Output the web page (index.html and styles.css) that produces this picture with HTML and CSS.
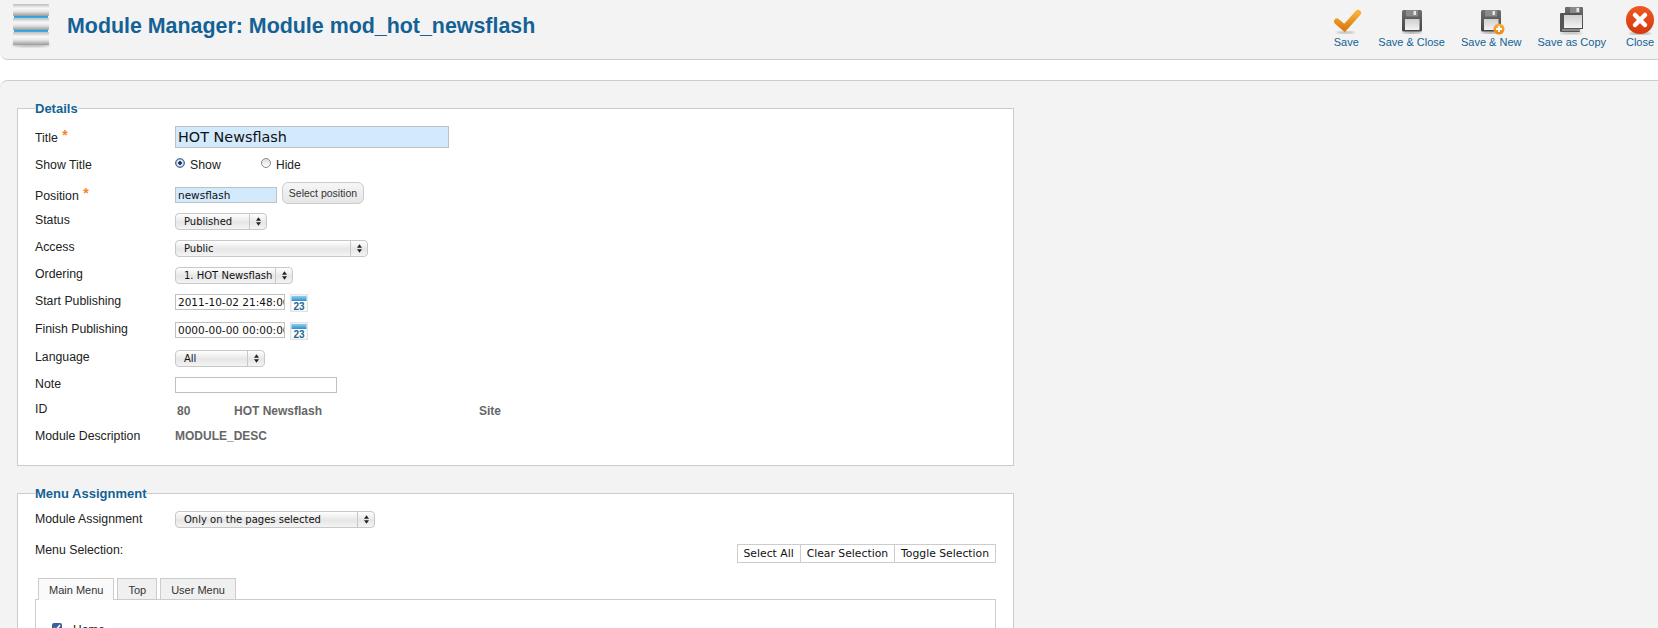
FILE: index.html
```html
<!DOCTYPE html>
<html lang="en">
<head>
<meta charset="utf-8">
<title>Module Manager: Module mod_hot_newsflash</title>
<link rel="stylesheet" href="styles.css">
</head>
<body>
<svg class="defs" aria-hidden="true">
  <defs>
    <linearGradient id="bar" x1="0" y1="0" x2="0" y2="1"><stop offset="0" stop-color="#bdbdbd"/><stop offset=".35" stop-color="#f8f8f8"/><stop offset=".6" stop-color="#e8e8e8"/><stop offset="1" stop-color="#9a9a9a"/></linearGradient>
    <linearGradient id="blue" x1="0" y1="0" x2="0" y2="1"><stop offset="0" stop-color="#1291d6"/><stop offset="1" stop-color="#55bdea"/></linearGradient>
    <linearGradient id="chk" x1="0" y1="0" x2="0" y2="1"><stop offset="0" stop-color="#f8ad33"/><stop offset="1" stop-color="#dc7f12"/></linearGradient>
    <linearGradient id="flop" x1="0" y1="0" x2="0" y2="1"><stop offset="0" stop-color="#6f6f6f"/><stop offset="1" stop-color="#444"/></linearGradient>
    <linearGradient id="paper" x1="0" y1="0" x2="0" y2="1"><stop offset="0" stop-color="#cfcfcf"/><stop offset="1" stop-color="#f2f2f2"/></linearGradient>
    <linearGradient id="red" x1="0" y1="0" x2="0" y2="1"><stop offset="0" stop-color="#ee5a22"/><stop offset="1" stop-color="#d4380f"/></linearGradient>
    <linearGradient id="plus" x1="0" y1="0" x2="0" y2="1"><stop offset="0" stop-color="#f9b040"/><stop offset="1" stop-color="#ec8418"/></linearGradient>
    <linearGradient id="cal" x1="0" y1="0" x2="0" y2="1"><stop offset="0" stop-color="#8fd0f0"/><stop offset="1" stop-color="#2a8fcf"/></linearGradient>
    <filter id="soft"><feGaussianBlur stdDeviation="1"/></filter>
    <g id="floppy">
      <ellipse cx="16" cy="28.500" rx="10" ry="1.200" fill="#999" filter="url(#soft)"/>
      <path d="M7.500 6h17a1.500 1.500 0 0 1 1.500 1.500v18.500a1.500 1.500 0 0 1-1.500 1.500h-17a1.500 1.500 0 0 1-1.500-1.500v-18.500a1.500 1.500 0 0 1 1.500-1.500z" fill="url(#flop)"/>
      <rect x="10" y="6" width="12" height="6.500" fill="#8a8a8a"/>
      <rect x="17.500" y="7" width="2.500" height="4" fill="#e6e6e6"/>
      <rect x="9" y="15" width="14.500" height="11" fill="url(#paper)"/>
    </g>
    <g id="calendar">
      <rect width="18" height="18" fill="#e4e4e4"/>
      <rect x="1.500" y="1.500" width="15" height="15" fill="#fff"/>
      <rect x="1.500" y="2" width="15" height="5" fill="url(#cal)"/>
    </g>
  </defs>
</svg>

<header class="header">
  <svg class="logo" viewBox="0 0 40 48" width="40" height="48" aria-hidden="true">
    <ellipse cx="20" cy="45" rx="19" ry="2" fill="#bbb" filter="url(#soft)"/>
    <rect x="3" y="15" width="34" height="4" fill="url(#blue)"/>
    <rect x="3" y="29" width="34" height="4" fill="url(#blue)"/>
    <rect x="2" y="4" width="36" height="12" rx="1" fill="url(#bar)"/>
    <rect x="2" y="18" width="36" height="12" rx="1" fill="url(#bar)"/>
    <rect x="2" y="32" width="36" height="13" rx="1" fill="url(#bar)"/>
  </svg>
  <h1 class="page-title">Module Manager: Module mod_hot_newsflash</h1>
  <nav class="toolbar">
    <a class="tool tool-save">
      <svg viewBox="0 0 32 32" width="32" height="32" aria-hidden="true">
        <ellipse cx="15.500" cy="28.500" rx="9" ry="1" fill="#aaa" filter="url(#soft)"/>
        <path d="M7 17.500l7.500 6.500 13.500-15" fill="none" stroke="url(#chk)" stroke-width="6" stroke-linecap="round" stroke-linejoin="miter"/>
      </svg>
      <span>Save</span>
    </a>
    <a class="tool">
      <svg viewBox="0 0 32 32" width="32" height="32" aria-hidden="true"><use href="#floppy"/></svg>
      <span>Save &amp; Close</span>
    </a>
    <a class="tool">
      <svg viewBox="0 0 32 32" width="32" height="32" aria-hidden="true">
        <use href="#floppy"/>
        <circle cx="24" cy="25" r="5.500" fill="url(#plus)"/>
        <path d="M24 22v6M21 25h6" stroke="#fff" stroke-width="1.800"/>
      </svg>
      <span>Save &amp; New</span>
    </a>
    <a class="tool">
      <svg viewBox="0 0 32 32" width="32" height="32" aria-hidden="true">
        <ellipse cx="15" cy="29" rx="11" ry="1" fill="#aaa" filter="url(#soft)"/>
        <path d="M10 3h16a1 1 0 0 1 1 1v21h-18v-21a1 1 0 0 1 1-1z" fill="url(#flop)"/>
        <rect x="14" y="3" width="10" height="6" fill="#8a8a8a"/>
        <rect x="20.500" y="4" width="2.500" height="4" fill="#e6e6e6"/>
        <rect x="4" y="9" width="20" height="19" rx="1" fill="#555"/>
        <rect x="8" y="11" width="18" height="13" fill="url(#paper)"/>
        <path d="M6 26h19" stroke="#ddd" stroke-width=".8"/>
      </svg>
      <span>Save as Copy</span>
    </a>
    <a class="tool tool-close">
      <svg viewBox="0 0 32 32" width="32" height="32" aria-hidden="true">
        <ellipse cx="16" cy="29.500" rx="11" ry="1.200" fill="#999" filter="url(#soft)"/>
        <circle cx="16" cy="16" r="14" fill="url(#red)"/>
        <path d="M11 11l10 10M21 11l-10 10" stroke="#fff" stroke-width="4.500" stroke-linecap="round"/>
      </svg>
      <span>Close</span>
    </a>
  </nav>
</header>

<main class="content">
  <fieldset class="panel panel-details">
    <legend>Details</legend>
    <div class="form form-details">
      <label class="lbl">Title <span class="star">*</span></label>
      <div><input class="inp inp-title req" type="text" value="HOT Newsflash"></div>

      <label class="lbl">Show Title</label>
      <div class="radios">
        <input class="radio" type="radio" name="showtitle" checked><span class="radio-text radio-show">Show</span>
        <input class="radio" type="radio" name="showtitle"><span class="radio-text">Hide</span>
      </div>

      <label class="lbl">Position <span class="star">*</span></label>
      <div class="position">
        <input class="inp inp-pos req" type="text" value="newsflash">
        <button class="btn-pos" type="button">Select position</button>
      </div>

      <label class="lbl">Status</label>
      <div class="select w-status"><select><option>Published</option></select><span class="arrows"><svg viewBox="0 0 6 10" width="5" height="9"><path d="M3 0l3 4H0zM3 10L0 6h6z" fill="#222"/></svg></span></div>

      <label class="lbl">Access</label>
      <div class="select w-access"><select><option>Public</option></select><span class="arrows"><svg viewBox="0 0 6 10" width="5" height="9"><path d="M3 0l3 4H0zM3 10L0 6h6z" fill="#222"/></svg></span></div>

      <label class="lbl">Ordering</label>
      <div class="select w-order"><select><option>1. HOT Newsflash</option></select><span class="arrows"><svg viewBox="0 0 6 10" width="5" height="9"><path d="M3 0l3 4H0zM3 10L0 6h6z" fill="#222"/></svg></span></div>

      <label class="lbl">Start Publishing</label>
      <div class="date">
        <input class="inp inp-date" type="text" value="2011-10-02 21:48:00">
        <svg class="cal" viewBox="0 0 18 18" width="18" height="18" aria-hidden="true">
          <use href="#calendar"/>
          <text class="cal-num" x="9" y="15.500">23</text>
        </svg>
      </div>

      <label class="lbl">Finish Publishing</label>
      <div class="date">
        <input class="inp inp-date" type="text" value="0000-00-00 00:00:00">
        <svg class="cal" viewBox="0 0 18 18" width="18" height="18" aria-hidden="true">
          <use href="#calendar"/>
          <text class="cal-num" x="9" y="15.500">23</text>
        </svg>
      </div>

      <label class="lbl">Language</label>
      <div class="select w-lang"><select><option>All</option></select><span class="arrows"><svg viewBox="0 0 6 10" width="5" height="9"><path d="M3 0l3 4H0zM3 10L0 6h6z" fill="#222"/></svg></span></div>

      <label class="lbl">Note</label>
      <div><input class="inp inp-note" type="text"></div>

      <label class="lbl">ID</label>
      <div class="readonly ids"><span class="id-num">80</span><span class="id-name">HOT Newsflash</span><span>Site</span></div>

      <label class="lbl">Module Description</label>
      <div class="readonly">MODULE_DESC</div>
    </div>
  </fieldset>

  <fieldset class="panel panel-menu">
    <legend>Menu Assignment</legend>
    <div class="form form-menu">
      <label class="lbl">Module Assignment</label>
      <div class="select w-assign"><select><option>Only on the pages selected</option></select><span class="arrows"><svg viewBox="0 0 6 10" width="5" height="9"><path d="M3 0l3 4H0zM3 10L0 6h6z" fill="#222"/></svg></span></div>

      <label class="lbl">Menu Selection:</label>
      <div class="selection-btns">
        <button type="button">Select All</button><button type="button">Clear Selection</button><button type="button">Toggle Selection</button>
      </div>
    </div>
    <ul class="tabs">
      <li class="tab active">Main Menu</li>
      <li class="tab tab-top">Top</li>
      <li class="tab">User Menu</li>
    </ul>
    <div class="pane">
      <div class="menu-item"><input class="check" type="checkbox" checked><span>Home</span></div>
    </div>
  </fieldset>
</main>
</body>
</html>
```
FILE: styles.css
```css
* { box-sizing: border-box; }
html, body { height: 628px; }
body {
  margin: 0;
  overflow: hidden;
  background: #fff;
  color: #222;
  font: 12px/14px "Liberation Sans", Arial, sans-serif;
}
.defs { position: absolute; width: 0; height: 0; }

/* header */
.header {
  display: flex;
  align-items: flex-start;
  height: 60px;
  background: #f3f3f3;
  border-bottom: 1px solid #ccc;
  border-bottom-left-radius: 8px;
  padding-left: 11px;
}
.logo { flex: none; }
.page-title {
  margin: 12px 0 0 16px;
  font: bold 21.400px/28px "Liberation Sans", Arial, sans-serif;
  color: #146295;
  white-space: nowrap;
}
.toolbar { display: flex; margin-left: auto; padding-right: 2px; padding-top: 4px; }
.tool {
  display: flex;
  flex-direction: column;
  align-items: center;
  padding: 0 8px;
  color: #146295;
  font-size: 11px;
  line-height: 14px;
  white-space: nowrap;
}
.tool svg { display: block; margin-bottom: -1px; }
.tool-save { min-width: 47px; }
.tool-close { padding: 0 0 0 10px; }

/* content */
.content {
  margin-top: 20px;
  height: 548px;
  background: #f3f3f3;
  border-top: 1px solid #ccc;
  border-top-left-radius: 8px;
  padding: 20px 0 0 17px;
}
.panel {
  width: 997px;
  margin: 0;
  padding: 0 17px;
  background: #fff;
  border: 1px solid #ccc;
  min-width: 0;
}
.panel legend {
  padding: 0;
  font: bold 13px/15px "Liberation Sans", Arial, sans-serif;
  color: #146295;
}
.panel-details { padding-top: 15px; padding-bottom: 22px; }
.panel-menu { margin-top: 20px; padding-top: 11px; height: 300px; }

.form { display: grid; grid-template-columns: 140px 1fr; }
.form-details { grid-template-rows: 27px 31px 24px 27px 27px 27px 28px 28px 27px 25px 27px 14px; }
.form-menu { grid-template-rows: 31px 35px; }

.lbl { color: #222; font-size: 12.300px; }
.star { color: #f7841e; font-size: 14px; line-height: 0; font-weight: bold; position: relative; top: -2px; left: 1px; }

/* inputs */
.inp {
  display: block;
  height: 16px;
  padding: 0 0 0 2px;
  border: 1px solid #c0c0c0;
  border-radius: 0;
  background: #fff;
  color: #111;
  font: 10.500px/14px "DejaVu Sans", sans-serif;
  outline: none;
}
.req { background: #d3eafd; }
.inp-title { width: 274px; height: 22px; margin-top: -5px; font-size: 14.400px; line-height: 20px; }
.inp-pos { width: 102px; }
.inp-date { width: 110px; }
.inp-note { width: 162px; }

.radios { display: flex; align-items: center; height: 14px; }
.radio {
  appearance: none;
  width: 10px;
  height: 10px;
  margin: 0;
  border: 1px solid #8a8a8a;
  border-radius: 50%;
  background: linear-gradient(#ddd, #fff);
  position: relative;
  top: -2px;
}
.radio:checked {
  border-color: #4a6a96;
  background: radial-gradient(circle, #1d2f55 0 1.500px, #dbe7f5 2px 3px, #6f95c8 4px);
}
.radio-text { margin-left: 5px; }
.radio-show { width: 71px; font-size: 12.300px; }

.position { display: flex; align-items: flex-start; gap: 5px; }
.position .inp { margin-top: -2px; }
.btn-pos {
  width: 82px;
  height: 22px;
  margin-top: -7px;
  padding: 0;
  border: 1px solid #ccc;
  border-radius: 6px;
  background: linear-gradient(#f6f6f6, #e6e6e6);
  color: #333;
  font: 10.500px/14px "Liberation Sans", Arial, sans-serif;
}

/* selects */
.select { position: relative; height: 17px; }
.select select {
  appearance: none;
  display: block;
  width: 100%;
  height: 17px;
  padding: 0 0 0 8px;
  border: 1px solid #c8c8c8;
  border-radius: 4px;
  background: linear-gradient(#fff, #e6e6e6 55%, #f4f4f4);
  color: #111;
  font: 10px/15px "DejaVu Sans", sans-serif;
}
.arrows {
  position: absolute;
  top: 1px;
  right: 1px;
  bottom: 1px;
  width: 17px;
  display: flex;
  align-items: center;
  justify-content: center;
  border-left: 1px solid #c8c8c8;
}
.w-status { width: 92px; }
.w-access { width: 193px; }
.w-order { width: 118px; }
.w-lang { width: 90px; }
.w-assign { width: 200px; margin-top: -1px; }

/* date */
.date { display: flex; align-items: flex-start; gap: 5px; }
.cal { flex: none; }
.cal-num { font: bold 10px "Liberation Sans", Arial, sans-serif; fill: #1a668f; text-anchor: middle; }

/* read-only */
.readonly { color: #666; font-weight: bold; }
.ids { display: flex; margin-top: 2px; padding-left: 2px; }
.id-num { width: 57px; }
.id-name { width: 245px; }

/* menu */
.selection-btns { display: flex; justify-content: flex-end; padding-top: 1px; }
.selection-btns button {
  height: 19px;
  margin: 0 0 0 -1px;
  padding: 0 6px;
  border: 1px solid #ccc;
  border-radius: 0;
  background: #fff;
  color: #111;
  font: 10.800px/14px "DejaVu Sans", sans-serif;
}
.tabs { display: flex; gap: 3px; list-style: none; margin: 0; padding: 0 0 0 3px; height: 21px; position: relative; z-index: 1; }
.tab {
  height: 21px;
  padding: 3px 10px 0;
  border: 1px solid #ccc;
  border-bottom: 0;
  background: #f0f0f0;
  color: #333;
  font-size: 11px;
  line-height: 16px;
}
.tab-top { padding: 3px 10px 0; }
.tab.active { height: 22px; background: #fafafa; }
.pane {
  width: 961px;
  height: 200px;
  border: 1px solid #ccc;
  background: #fff;
  padding: 23px 0 0 16px;
}
.menu-item { display: flex; align-items: flex-start; gap: 11px; }
.check { width: 10px; height: 10px; margin: 0; accent-color: #3b5f9c; flex: none; }
```
